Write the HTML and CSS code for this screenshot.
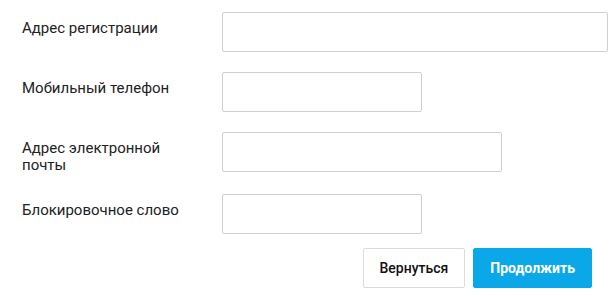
FILE: index.html
```html
<!DOCTYPE html>
<html lang="ru">
<head>
    <meta charset="UTF-8">
    <title>Регистрация</title>
    <link rel="stylesheet" href="styles.css">
</head>
<body>
    <form class="form">
        <div class="row">
            <label class="label" for="address">Адрес регистрации</label>
            <input class="field field-wide" id="address" type="text">
        </div>
        <div class="row">
            <label class="label" for="phone">Мобильный телефон</label>
            <input class="field field-short" id="phone" type="text">
        </div>
        <div class="row">
            <label class="label" for="email">Адрес электронной почты</label>
            <input class="field field-mid" id="email" type="text">
        </div>
        <div class="row">
            <label class="label" for="word">Блокировочное слово</label>
            <input class="field field-short" id="word" type="text">
        </div>
        <div class="actions">
            <button class="btn btn-back" type="button">Вернуться</button>
            <button class="btn btn-next" type="button">Продолжить</button>
        </div>
    </form>
</body>
</html>
```

FILE: styles.css
```css
* {
    margin: 0;
    padding: 0;
    box-sizing: border-box;
}

body {
    font-family: Roboto, 'Liberation Sans', Arial, sans-serif;
    font-size: 14px;
    color: #222;
    background: #fff;
}

.form {
    padding: 12px 0 0 22px;
}

.row {
    display: flex;
    align-items: flex-start;
    margin-bottom: 20px;
}

.label {
    width: 200px;
    padding: 8px 40px 0 0;
    font-size: 15px;
    line-height: 17px;
}

.field {
    height: 40px;
    border: 1px solid #cfcfcf;
    border-radius: 2px;
    background: #fff;
    font: inherit;
    padding: 0 10px;
}

.field-wide {
    width: 386px;
}

.field-mid {
    width: 280px;
}

.field-short {
    width: 200px;
}

.actions {
    display: flex;
    justify-content: flex-end;
    gap: 8px;
    margin-top: -6px;
    padding-right: 19px;
}

.btn {
    height: 40px;
    padding: 0 16px;
    border-radius: 2px;
    font-family: inherit;
    font-size: 14px;
    font-weight: 500;
    cursor: pointer;
}

.btn-back {
    background: #fff;
    color: #111;
    border: 1px solid #dcdcdc;
}

.btn-next {
    background: #0aa8e8;
    color: #fff;
    border: 1px solid #0aa8e8;
    font-weight: 700;
}
```
